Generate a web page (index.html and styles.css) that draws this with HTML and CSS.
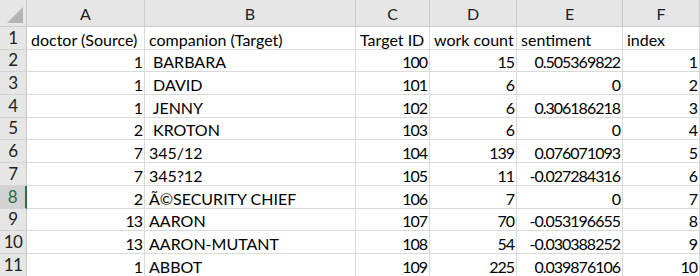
FILE: index.html
```html
<!DOCTYPE html>
<html>
<head>
<meta charset="utf-8">
<link rel="stylesheet" href="styles.css">
</head>
<body>
<div class="sheet">
  <div class="corner"><span class="tri"></span></div>
  <div class="ch">A</div><div class="ch">B</div><div class="ch">C</div><div class="ch">D</div><div class="ch">E</div><div class="ch">F</div>

  <div class="rh">1</div><div class="c">doctor (Source)</div><div class="c">companion (Target)</div><div class="c">Target ID</div><div class="c">work count</div><div class="c">sentiment</div><div class="c">index</div>
  <div class="rh">2</div><div class="c n">1</div><div class="c"> BARBARA</div><div class="c n">100</div><div class="c n">15</div><div class="c n">0.505369822</div><div class="c n">1</div>
  <div class="rh">3</div><div class="c n">1</div><div class="c"> DAVID</div><div class="c n">101</div><div class="c n">6</div><div class="c n">0</div><div class="c n">2</div>
  <div class="rh">4</div><div class="c n">1</div><div class="c"> JENNY</div><div class="c n">102</div><div class="c n">6</div><div class="c n">0.306186218</div><div class="c n">3</div>
  <div class="rh">5</div><div class="c n">2</div><div class="c"> KROTON</div><div class="c n">103</div><div class="c n">6</div><div class="c n">0</div><div class="c n">4</div>
  <div class="rh">6</div><div class="c n">7</div><div class="c">345/12</div><div class="c n">104</div><div class="c n">139</div><div class="c n">0.076071093</div><div class="c n">5</div>
  <div class="rh">7</div><div class="c n">7</div><div class="c">345?12</div><div class="c n">105</div><div class="c n">11</div><div class="c n">-0.027284316</div><div class="c n">6</div>
  <div class="rh sel">8</div><div class="c n">2</div><div class="c">Ã©SECURITY CHIEF</div><div class="c n">106</div><div class="c n">7</div><div class="c n">0</div><div class="c n">7</div>
  <div class="rh">9</div><div class="c n">13</div><div class="c">AARON</div><div class="c n">107</div><div class="c n">70</div><div class="c n">-0.053196655</div><div class="c n">8</div>
  <div class="rh">10</div><div class="c n">13</div><div class="c">AARON-MUTANT</div><div class="c n">108</div><div class="c n">54</div><div class="c n">-0.030388252</div><div class="c n">9</div>
  <div class="rh">11</div><div class="c n">1</div><div class="c">ABBOT</div><div class="c n">109</div><div class="c n">225</div><div class="c n">0.039876106</div><div class="c n">10</div>
</div>
</body>
</html>
```
FILE: styles.css
```css
html, body {
  margin: 0;
  padding: 0;
  background: #ffffff;
  overflow: hidden;
}
.sheet {
  display: grid;
  grid-template-columns: 27px 118px 211px 74px 87px 106px 77px;
  grid-template-rows: 27px repeat(11, 22.7px);
  font-family: Lato, "Open Sans", sans-serif;
  font-size: 16px;
  color: #000;
  width: 700px;
}
.corner {
  background: #e6e6e6;
  border-right: 1px solid #cacaca;
  border-bottom: 1px solid #cacaca;
  position: relative;
}
.tri {
  position: absolute;
  right: 3px;
  bottom: 3px;
  width: 0;
  height: 0;
  border-left: 16px solid transparent;
  border-bottom: 16px solid #b4b4b4;
}
.ch {
  background: #e6e6e6;
  border-right: 1px solid #cacaca;
  border-bottom: 1px solid #cacaca;
  display: flex;
  align-items: flex-end;
  justify-content: center;
  padding-bottom: 3px;
  color: #222;
  font-size: 16px;
}
.rh {
  background: #e6e6e6;
  border-right: 1px solid #c6c6c6;
  border-bottom: 1px solid #d4d4d4;
  display: flex;
  align-items: flex-end;
  justify-content: center;
  padding-bottom: 1px;
  color: #222;
  font-size: 17px;
  letter-spacing: -0.5px;
}
.rh.sel {
  background: #d2d2d2;
  color: #217346;
  border-right: 2px solid #217346;
}
.c {
  border-right: 1px solid #dadada;
  border-bottom: 1px solid #dadada;
  display: flex;
  align-items: flex-end;
  padding: 0 4px 0 4px;
  white-space: pre;
  overflow: hidden;
}
.c.n {
  justify-content: flex-end;
  padding-right: 2px;
  letter-spacing: -1px;
}
```
